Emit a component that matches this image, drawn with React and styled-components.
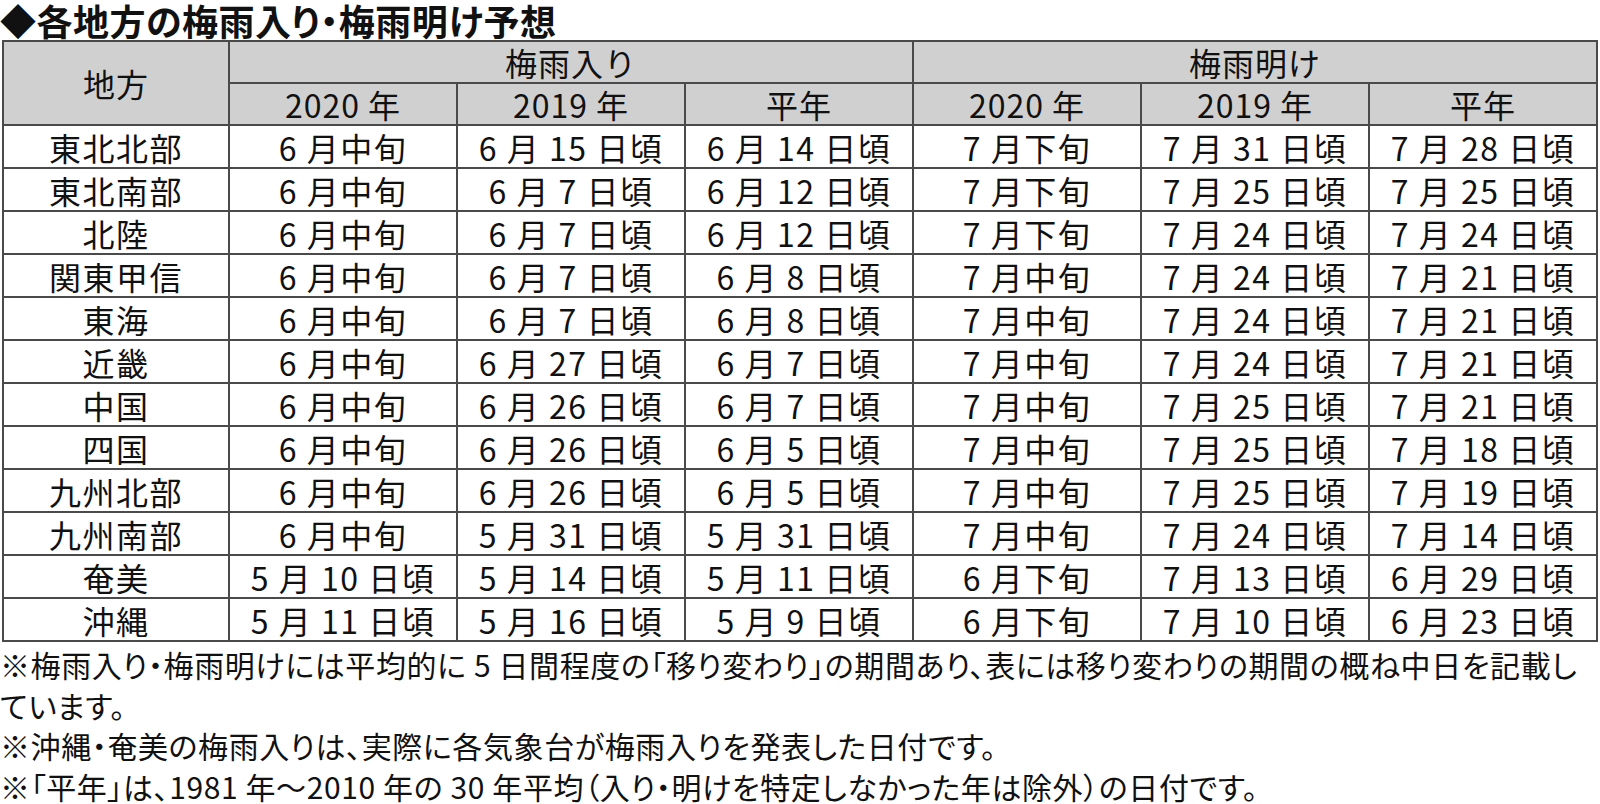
import React from "react";
import styled, { createGlobalStyle } from "styled-components";

const GlobalStyle = createGlobalStyle`
  html, body {
    margin: 0;
    padding: 0;
    background: #ffffff;
  }
  body {
    font-family: "Noto Sans CJK JP", "Liberation Sans", sans-serif;
    color: #111111;
  }
`;

const years = ["2020 年", "2019 年", "平年"];

const rows = [
  ["東北北部", "6 月中旬", "6 月 15 日頃", "6 月 14 日頃", "7 月下旬", "7 月 31 日頃", "7 月 28 日頃"],
  ["東北南部", "6 月中旬", "6 月 7 日頃", "6 月 12 日頃", "7 月下旬", "7 月 25 日頃", "7 月 25 日頃"],
  ["北陸", "6 月中旬", "6 月 7 日頃", "6 月 12 日頃", "7 月下旬", "7 月 24 日頃", "7 月 24 日頃"],
  ["関東甲信", "6 月中旬", "6 月 7 日頃", "6 月 8 日頃", "7 月中旬", "7 月 24 日頃", "7 月 21 日頃"],
  ["東海", "6 月中旬", "6 月 7 日頃", "6 月 8 日頃", "7 月中旬", "7 月 24 日頃", "7 月 21 日頃"],
  ["近畿", "6 月中旬", "6 月 27 日頃", "6 月 7 日頃", "7 月中旬", "7 月 24 日頃", "7 月 21 日頃"],
  ["中国", "6 月中旬", "6 月 26 日頃", "6 月 7 日頃", "7 月中旬", "7 月 25 日頃", "7 月 21 日頃"],
  ["四国", "6 月中旬", "6 月 26 日頃", "6 月 5 日頃", "7 月中旬", "7 月 25 日頃", "7 月 18 日頃"],
  ["九州北部", "6 月中旬", "6 月 26 日頃", "6 月 5 日頃", "7 月中旬", "7 月 25 日頃", "7 月 19 日頃"],
  ["九州南部", "6 月中旬", "5 月 31 日頃", "5 月 31 日頃", "7 月中旬", "7 月 24 日頃", "7 月 14 日頃"],
  ["奄美", "5 月 10 日頃", "5 月 14 日頃", "5 月 11 日頃", "6 月下旬", "7 月 13 日頃", "6 月 29 日頃"],
  ["沖縄", "5 月 11 日頃", "5 月 16 日頃", "5 月 9 日頃", "6 月下旬", "7 月 10 日頃", "6 月 23 日頃"],
];

export default function App() {
  return (
    <Page>
      <GlobalStyle />
      <Title>◆各地方の梅雨入り・梅雨明け予想</Title>
      <Table>
        <colgroup>
          <col style={{ width: 226 }} />
          {[0, 1, 2, 3, 4, 5].map((i) => (
            <col key={i} style={{ width: 228 }} />
          ))}
        </colgroup>
        <thead>
          <HeadRow>
            <HeadCell rowSpan={2}>地方</HeadCell>
            <HeadCell colSpan={3}>梅雨入り</HeadCell>
            <HeadCell colSpan={3}>梅雨明け</HeadCell>
          </HeadRow>
          <HeadRow>
            {[...years, ...years].map((y, i) => (
              <HeadCell key={i}>{y}</HeadCell>
            ))}
          </HeadRow>
        </thead>
        <tbody>
          {rows.map((row) => (
            <BodyRow key={row[0]}>
              {row.map((v, i) => (
                <Cell key={i}>{v}</Cell>
              ))}
            </BodyRow>
          ))}
        </tbody>
      </Table>
      <Notes>
        <Note>
          ※梅雨入り・梅雨明けには平均的に 5 日間程度の「移り変わり」の期間あり、表には移り変わりの期間の概ね中日を記載し
          <br />
          ています。
        </Note>
        <Note>※沖縄・奄美の梅雨入りは、実際に各気象台が梅雨入りを発表した日付です。</Note>
        <Note>※「平年」は、1981 年～2010 年の 30 年平均（入り・明けを特定しなかった年は除外）の日付です。</Note>
      </Notes>
    </Page>
  );
}

const Page = styled.div`
  width: 1600px;
  display: flex;
  flex-direction: column;
`;

const Title = styled.h1`
  margin: 0;
  height: 40px;
  line-height: 40px;
  font-size: 36px;
  font-weight: 700;
  letter-spacing: 0.5px;
  font-feature-settings: "palt";
  white-space: nowrap;
`;

const Table = styled.table`
  margin: 0 2px;
  width: 1596px;
  table-layout: fixed;
  border-collapse: collapse;
  border: 2px solid #3c3c3c;
`;

const HeadRow = styled.tr`
  height: 42px;
`;

const BodyRow = styled.tr`
  height: 43px;
`;

const HeadCell = styled.th`
  padding: 0;
  background: #d0d0d0;
  border: 2px solid #4a4a4a;
  font-size: 32px;
  font-weight: 400;
  line-height: 1;
  letter-spacing: 1px;
  text-align: center;
  vertical-align: middle;
  white-space: nowrap;
`;

const Cell = styled.td`
  padding: 0;
  background: #ffffff;
  border: 2px solid #4a4a4a;
  font-size: 32px;
  line-height: 1;
  letter-spacing: 1.5px;
  text-align: center;
  vertical-align: middle;
  white-space: nowrap;
`;

const Notes = styled.div`
  display: flex;
  flex-direction: column;
  padding-top: 2px;
`;

const Note = styled.p`
  margin: 0;
  font-size: 30px;
  line-height: 40.5px;
  letter-spacing: 0.6px;
  font-feature-settings: "palt";
  white-space: nowrap;
`;
